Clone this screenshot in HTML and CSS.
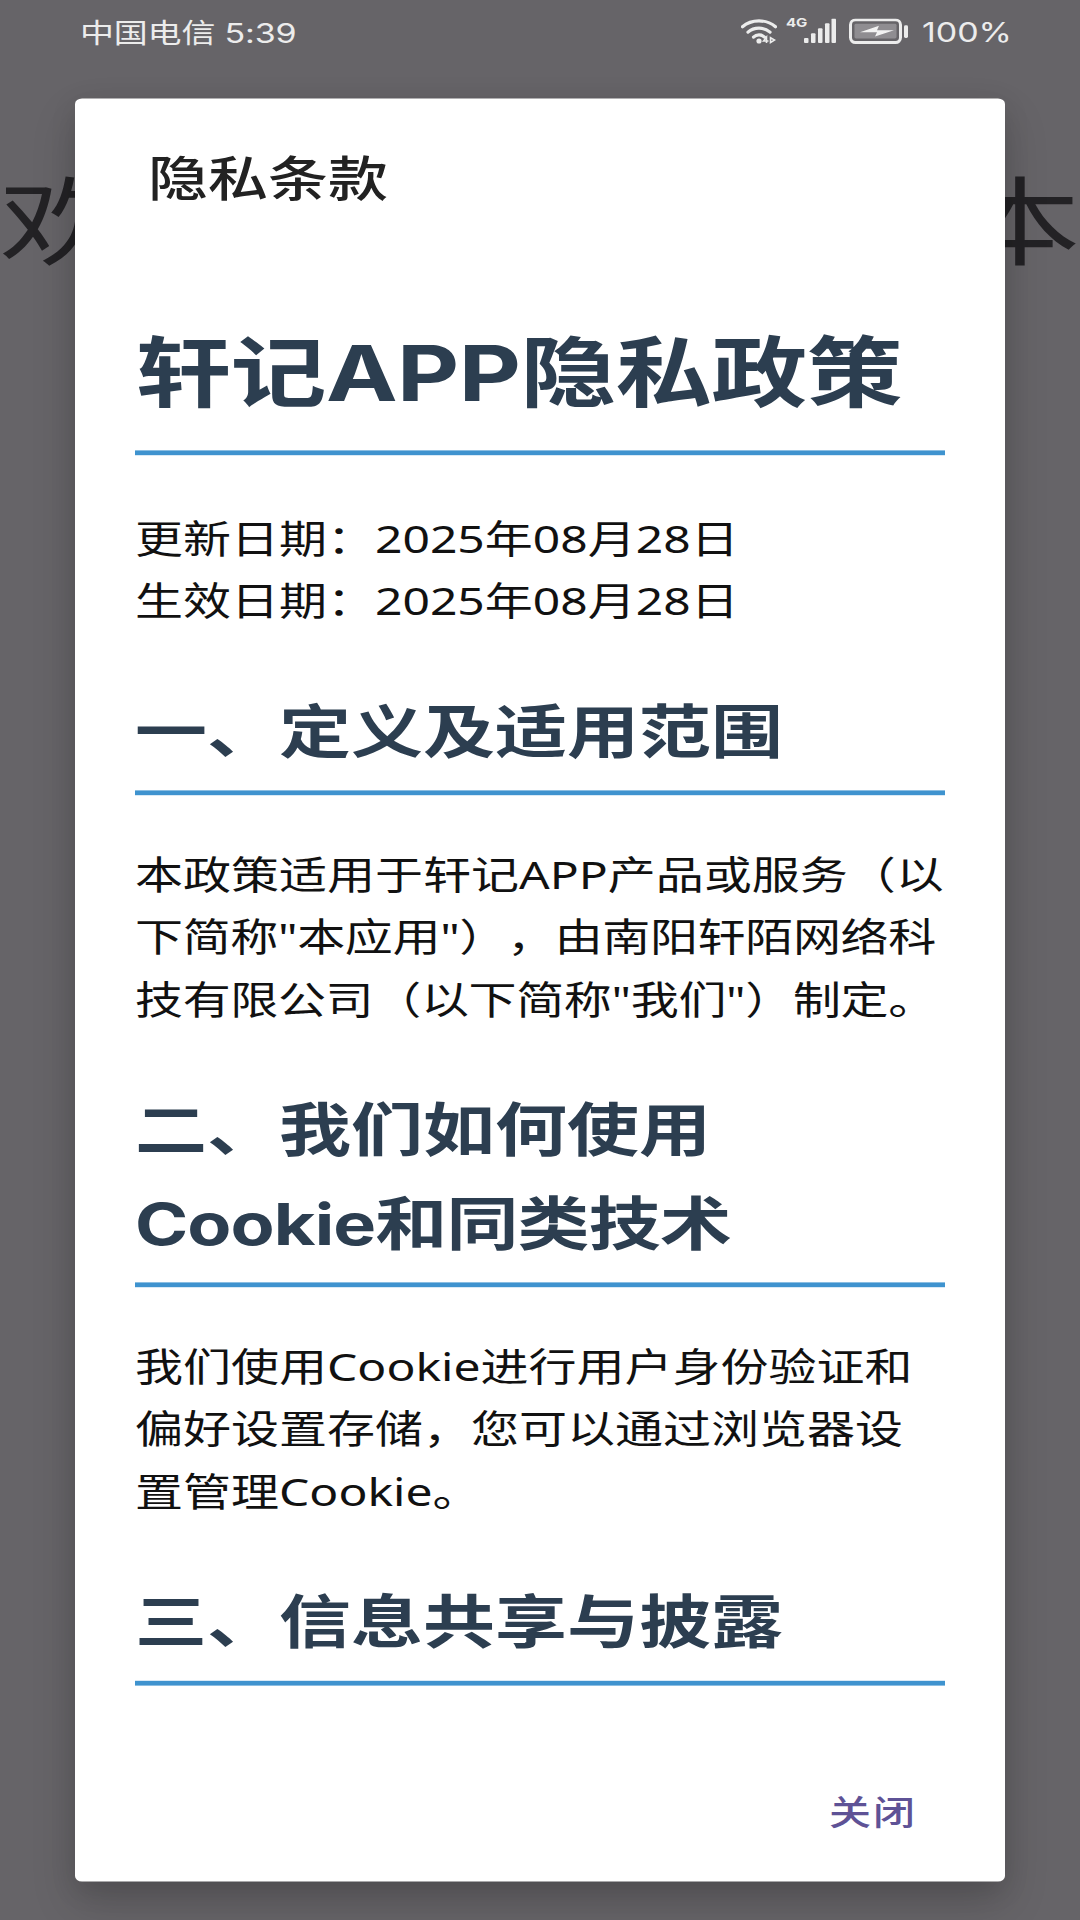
FILE: index.html
```html
<!DOCTYPE html>
<html lang="zh-CN">
<head>
<meta charset="utf-8">
<title>隐私条款</title>
<link rel="stylesheet" href="styles.css">
</head>
<body>
<div class="frame">
<div class="screen">
  <header class="status">
    <span class="status-left">中国电信 5:39</span>
    <div class="status-right">
      <svg class="ic-wifi" viewBox="0 0 36 26" preserveAspectRatio="none" aria-hidden="true">
        <path d="M1.5 8.5C10.5 .5 25.500 .5 34.500 8.500" class="st"/>
        <path d="M7 14C13 8.500 23 8.500 29 14" class="st"/>
        <path d="M12.500 19C15.500 16 20.500 16 23.500 19" class="st"/>
        <circle cx="18" cy="23" r="2.600" class="fl"/>
        <path d="M25.500 25v-6l-3 4h5M29.500 19.500l4 2.500-4 2.500z" class="thin"/>
      </svg>
      <div class="sig">
        <span class="g4">4G</span>
        <svg class="ic-bars" viewBox="0 0 32 26" preserveAspectRatio="none" aria-hidden="true">
          <rect x="0" y="20" width="4.500" height="5" rx="1" class="fl"/>
          <rect x="7" y="15" width="4.500" height="10" rx="1" class="fl"/>
          <rect x="14" y="10" width="4.500" height="15" rx="1" class="fl"/>
          <rect x="21" y="5" width="4.500" height="20" rx="1" class="fl"/>
          <rect x="27.500" y="0" width="4.500" height="25" rx="1" class="fl"/>
        </svg>
      </div>
      <svg class="ic-batt" viewBox="0 0 60 26" preserveAspectRatio="none" aria-hidden="true">
        <rect x="1.500" y="1.500" width="50" height="23" rx="5" class="batt-frame"/>
        <rect x="5.500" y="5.500" width="42" height="15" rx="1.500" class="batt-fill"/>
        <path d="M11 14L30 7.500 28 12H45L26 18.500 28 14z" class="bolt"/>
        <rect x="55" y="7" width="4" height="13" rx="1.500" class="fl"/>
      </svg>
      <span class="pct">100%</span>
    </div>
  </header>
  <div class="welcome"><span>欢</span><span>本</span></div>

  <section class="dialog">
    <h2 class="dialog-title">隐私条款</h2>
    <div class="doc">
      <h1>轩记APP隐私政策</h1>
      <p>更新日期：2025年08月28日</p>
      <p>生效日期：2025年08月28日</p>
      <h2>一、定义及适用范围</h2>
      <p>本政策适用于轩记APP产品或服务（以</p>
      <p class="tight-p">下简称"本应用"），由南阳轩陌网络科技有限公司（以下简称"我们"）制定。</p>
      <h2><span class="ln">二、我们如何使用</span><span class="ln tight">Cookie和同类技术</span></h2>
      <p>我们使用Cookie进行用户身份验证和偏好设置存储，您可以通过浏览器设置管理Cookie。</p>
      <h2>三、信息共享与披露</h2>
    </div>
    <div class="actions"><span class="close">关闭</span></div>
  </section>
</div>
</div>
</body>
</html>
```
FILE: styles.css
```css
* { box-sizing: border-box; }
html, body { margin: 0; padding: 0; }
body {
  font-family: Inter, "Noto Sans CJK SC", sans-serif;
  text-spacing-trim: space-all;
}
.frame {
  width: 1080px;
  height: 1920px;
  overflow: hidden;
}
/* The reference is a 1080x2400 phone screen squeezed to 1920 tall. */
.screen {
  position: relative;
  width: 1080px;
  height: 2400px;
  overflow: hidden;
  background: #666468;
  transform: scaleY(.8);
  transform-origin: top left;
}
.status {
  display: flex;
  justify-content: space-between;
  align-items: center;
  height: 78px;
  padding: 0 68px 0 80px;
  color: #ececec;
}
.status-left { font-size: 34px; letter-spacing: -.2px; }
.status-right { display: flex; align-items: center; }
.st { fill: none; stroke: #ececec; stroke-width: 3.2; stroke-linecap: round; }
.fl { fill: #ececec; }
.thin { fill: none; stroke: #ececec; stroke-width: 1.600; }
.ic-wifi { display: block; width: 36px; height: 32px; }
.sig { position: relative; width: 32px; height: 32px; margin-left: 27px; margin-right: 13px; }
.g4 {
  position: absolute;
  left: -18px;
  top: -2px;
  font-size: 15px;
  font-weight: 700;
  line-height: 16px;
}
.ic-bars { display: block; width: 32px; height: 32px; }
.ic-batt { display: block; width: 60px; height: 32px; }
.batt-frame { fill: none; stroke: #ececec; stroke-width: 3; }
.batt-fill { fill: #8f8d91; }
.bolt { fill: #f2f2f2; }
.pct { margin-left: 13px; font-size: 34px; }
.welcome {
  display: flex;
  justify-content: space-between;
  margin: 125px 0 0;
  font-size: 120px;
  line-height: 150px;
  color: #232225;
}
.dialog {
  position: absolute;
  left: 75px;
  top: 122.500px;
  width: 930px;
  height: 2229px;
  display: flex;
  flex-direction: column;
  background: #fff;
  border-radius: 7px;
  box-shadow: 0 26px 50px rgba(0, 0, 0, .16), 0 10px 30px rgba(0, 0, 0, .1);
}
.dialog-title {
  margin: 0;
  padding: 52.500px 0 0 73px;
  height: 210px;
  font-size: 60px;
  line-height: 97.500px;
  font-weight: 500;
  color: #222;
}
.doc {
  flex: 1;
  min-height: 0;
  overflow: hidden;
  padding: 55px 60px 0;
  color: #111;
  font-family: "Noto Sans", "Noto Sans CJK SC", sans-serif;
  font-size: 48px;
  line-height: 78px;
}
.doc h1, .doc h2 {
  font-family: Inter, "Noto Sans CJK SC", sans-serif;
  font-weight: 700;
  color: #2c3e50;
  border-bottom: 6.250px solid #3f93cf;
}
.doc h1 {
  margin: 0 0 65px;
  padding-bottom: 19px;
  font-size: 96px;
  line-height: 156px;
  letter-spacing: -.550px;
}
.doc h2 {
  margin: 66px 0 60px;
  padding-bottom: 15px;
  font-size: 72px;
  line-height: 117px;
}
.doc p { margin: 0; }
.tight-p { letter-spacing: -.350px; }
.ln { display: block; }
.tight { letter-spacing: -.900px; }
.actions {
  display: flex;
  justify-content: flex-end;
  height: 170px;
  padding: 46px 88px 0 0;
}
.close {
  font-size: 42px;
  line-height: 75px;
  letter-spacing: 2px;
  font-weight: 500;
  color: #5e5296;
}
```
